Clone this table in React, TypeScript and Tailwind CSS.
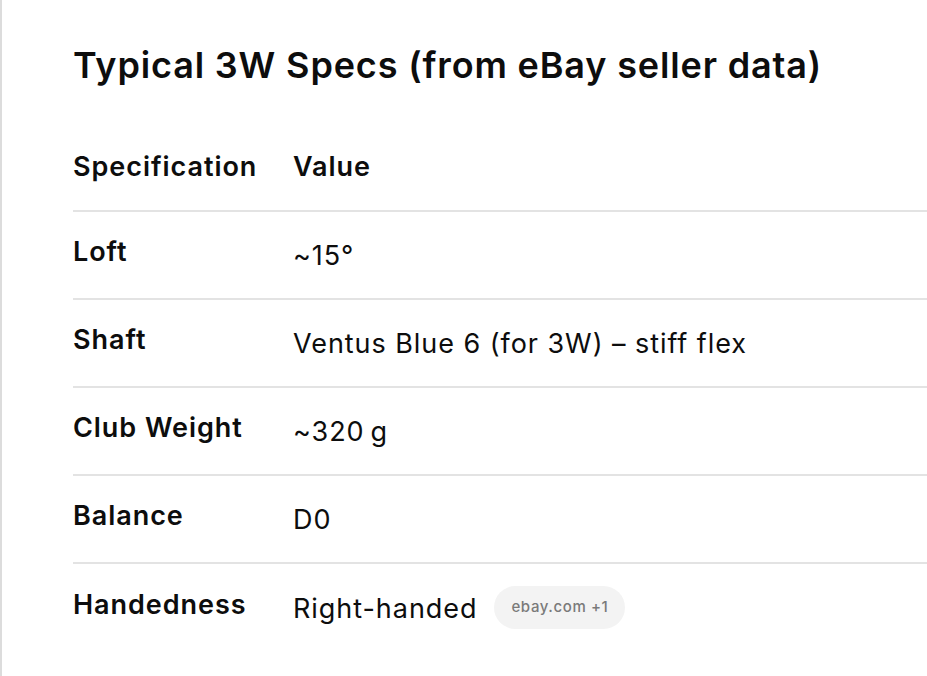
const rows = [
  { label: "Loft", value: "~15°" },
  { label: "Shaft", value: "Ventus Blue 6 (for 3W) – stiff flex" },
  { label: "Club Weight", value: "~320\u2009g" },
  { label: "Balance", value: "D0" },
  { label: "Handedness", value: "Right-handed", badge: "ebay.com +1" },
];

export default function App() {
  return (
    <div
      className="min-h-[676px] w-[927px] overflow-hidden bg-white text-[#0d0d0d] border-l-2 border-[#dcdcdc]"
      style={{ fontFamily: "Inter, 'Noto Sans', sans-serif" }}
    >
      <div className="pl-[71px] pt-[44px]">
        <h1 className="text-[36px] leading-[43px] font-semibold tracking-[0.85px]">
          Typical 3W Specs (from eBay seller data)
        </h1>

        <div className="mt-[37px] tracking-[0.95px]">
          {/* header */}
          <div className="flex items-center h-[88px] border-b-2 border-[#e3e3e3] text-[27px] font-semibold">
            <div className="w-[220px] shrink-0">Specification</div>
            <div>Value</div>
          </div>

          {rows.map((r) => (
            <div
              key={r.label}
              className="flex items-center h-[88px] border-b-2 border-[#e3e3e3] last:border-b-0 text-[27px]"
            >
              <div className="w-[220px] shrink-0 font-semibold mb-[5px]">{r.label}</div>
              <div className="flex items-center gap-[17px] mt-[3px]">
                <span>{r.value}</span>
                {r.badge && (
                  <span className="inline-flex items-center h-[43px] px-[17px] -mt-[5px] rounded-full bg-[#f3f3f3] text-[15px] font-medium tracking-[0.6px] text-[#7a7a7a]">
                    {r.badge}
                  </span>
                )}
              </div>
            </div>
          ))}
        </div>
      </div>
    </div>
  );
}
